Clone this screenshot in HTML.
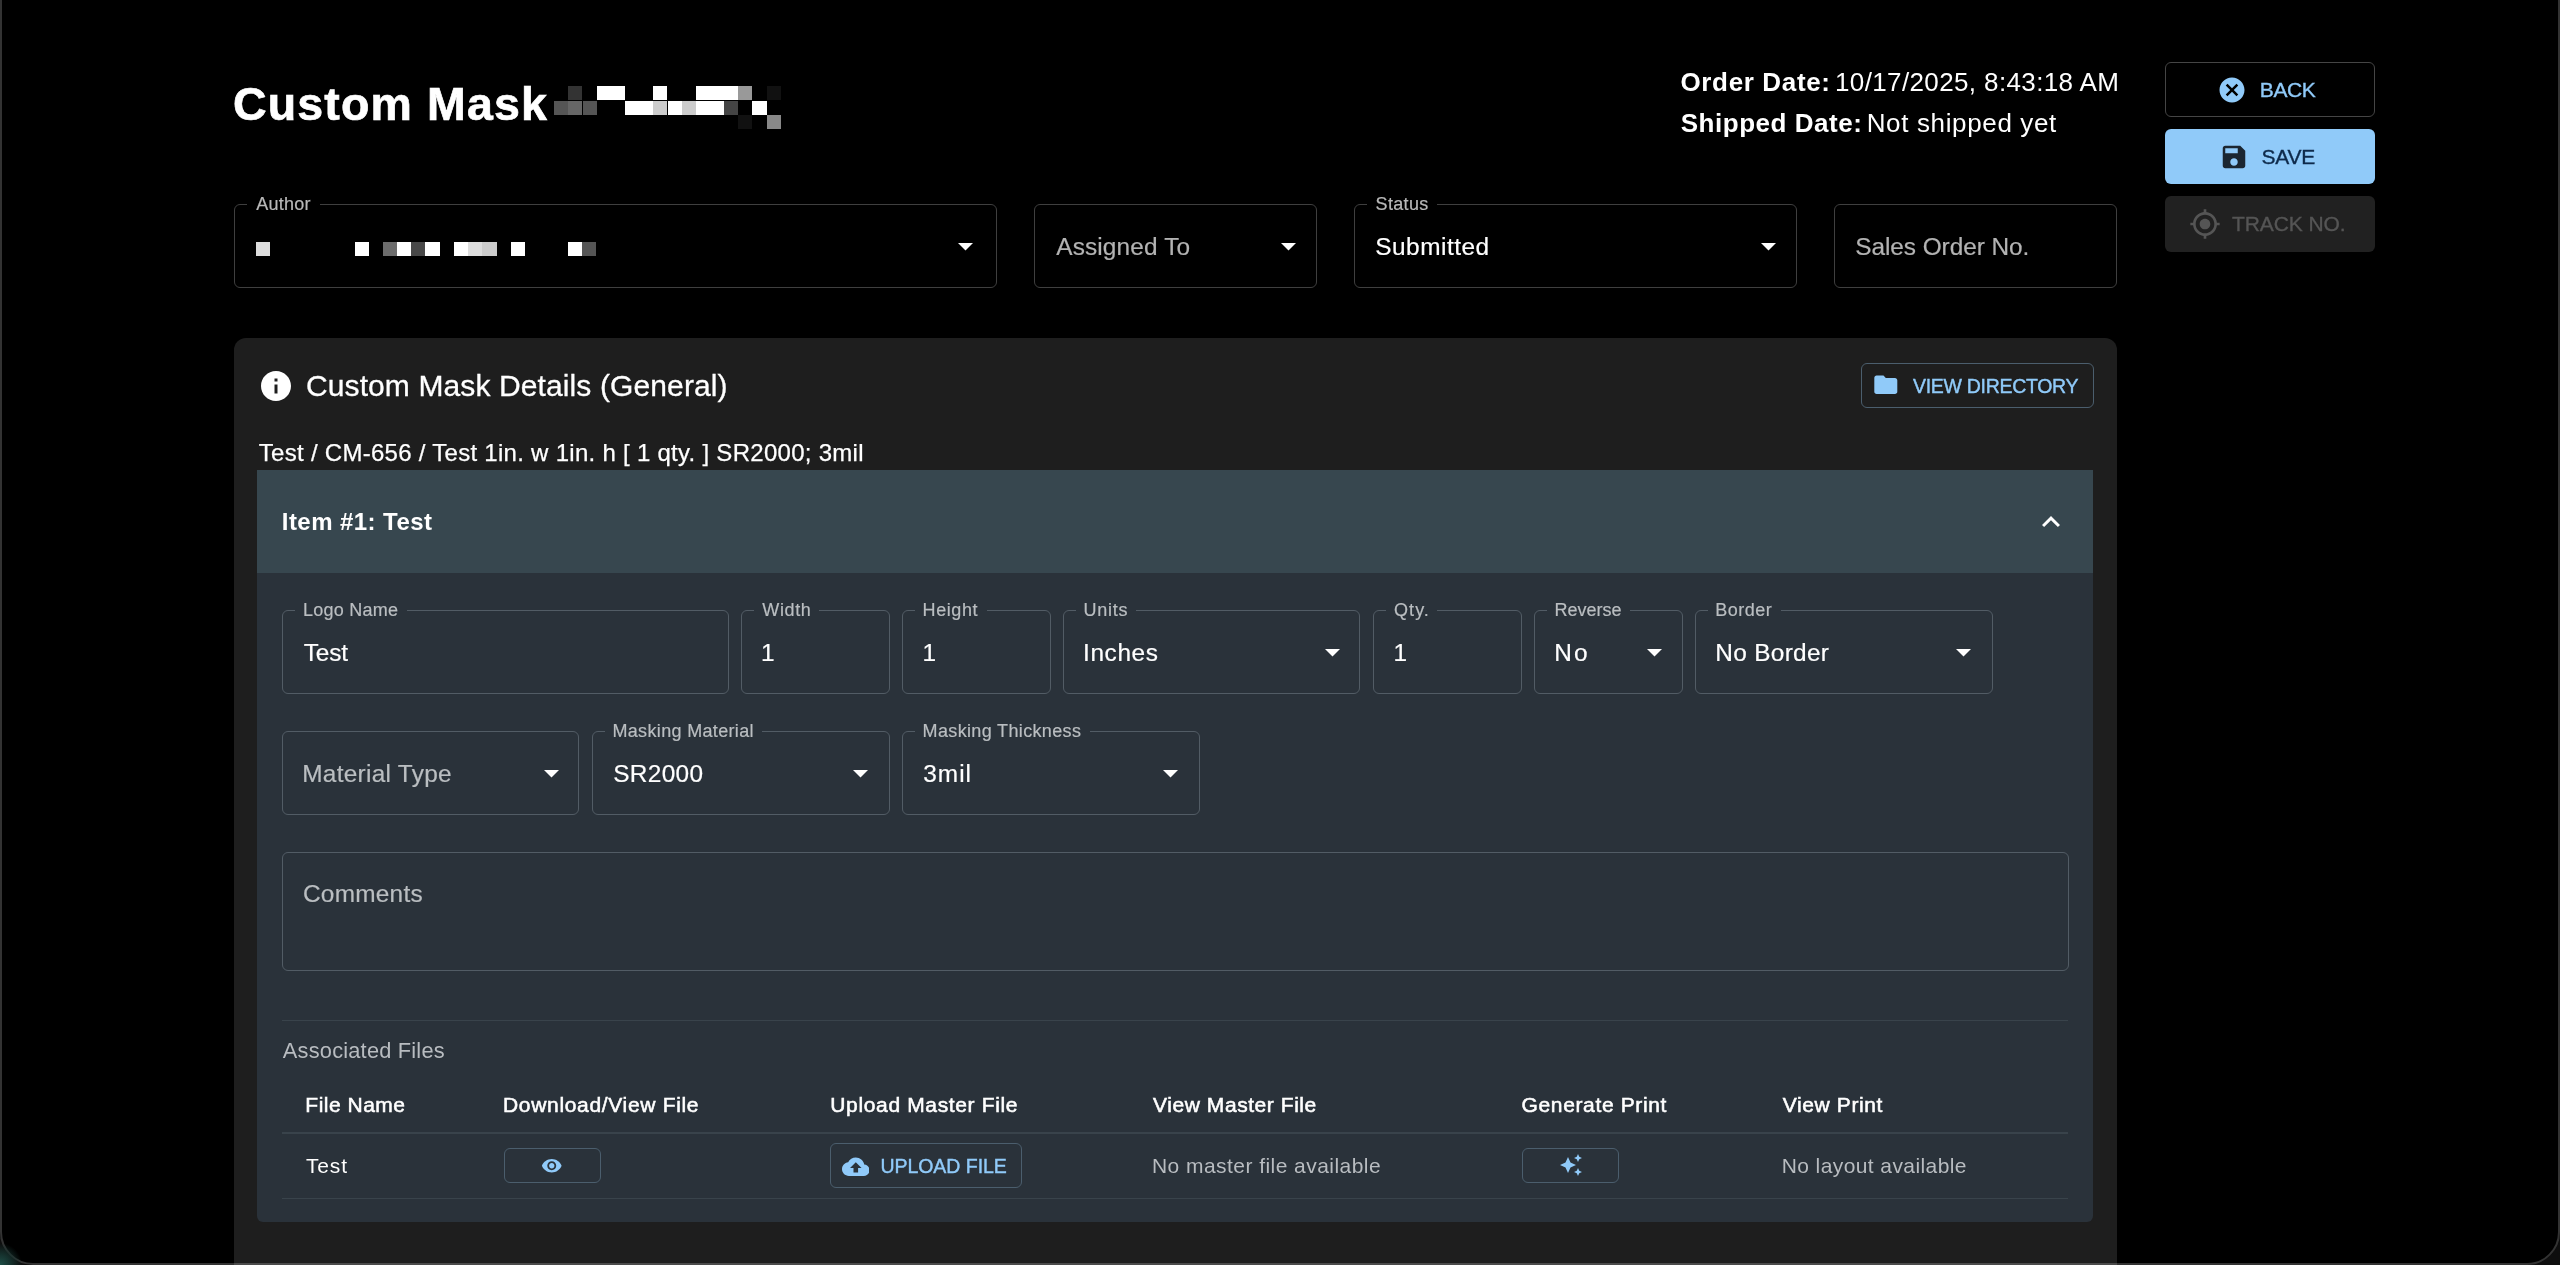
<!DOCTYPE html>
<html><head><meta charset="utf-8"><title>Custom Mask</title>
<style>
html,body{margin:0;padding:0;background:#000;font-family:"Liberation Sans",sans-serif;}
body{width:2560px;height:1265px;overflow:hidden;position:relative;font-family:"Liberation Sans",sans-serif;}
#root{position:absolute;left:0;top:0;width:2560px;height:1265px;overflow:hidden;will-change:transform;}
#root>div,#root>svg,#root>span{position:absolute;display:block}
.t{white-space:nowrap;line-height:1;}
.frame{left:0;top:-60px;width:2560px;height:1325px;box-sizing:border-box;border:2.3px solid rgba(255,255,255,0.2);border-radius:0 0 33px 33px;pointer-events:none;box-shadow:0 0 0 60px #0e0e0e}
.teal{left:0;top:1235px;width:30px;height:30px;background:radial-gradient(circle at 0 100%, #1f4f48 0, #16332f 10px, rgba(20,20,20,0) 22px)}
</style></head><body><div id="root">
<span id="title" class="t" style="left:233.00px;top:81.14px;font-size:46.5px;color:#fff;font-weight:700;letter-spacing:1.145px;-webkit-text-stroke:0.7px #fff;">Custom Mask</span>
<div style="left:568.4px;top:86.3px;width:14.100000000000023px;height:14.200000000000003px;background:rgb(51,51,51)"></div>
<div style="left:596.7px;top:86.3px;width:14.099999999999909px;height:14.200000000000003px;background:rgb(255,255,255)"></div>
<div style="left:610.8px;top:86.3px;width:14.200000000000045px;height:14.200000000000003px;background:rgb(255,255,255)"></div>
<div style="left:653.3px;top:86.3px;width:14.200000000000045px;height:14.200000000000003px;background:rgb(255,255,255)"></div>
<div style="left:695.8px;top:86.3px;width:14.200000000000045px;height:14.200000000000003px;background:rgb(255,255,255)"></div>
<div style="left:710.0px;top:86.3px;width:14.100000000000023px;height:14.200000000000003px;background:rgb(255,255,255)"></div>
<div style="left:724.1px;top:86.3px;width:14.199999999999932px;height:14.200000000000003px;background:rgb(255,255,255)"></div>
<div style="left:738.3px;top:86.3px;width:14.100000000000023px;height:14.200000000000003px;background:rgb(153,153,153)"></div>
<div style="left:766.6px;top:86.3px;width:14.199999999999932px;height:14.200000000000003px;background:rgb(17,17,17)"></div>
<div style="left:554.2px;top:100.5px;width:14.199999999999932px;height:14.200000000000003px;background:rgb(85,85,85)"></div>
<div style="left:568.4px;top:100.5px;width:14.100000000000023px;height:14.200000000000003px;background:rgb(102,102,102)"></div>
<div style="left:582.5px;top:100.5px;width:14.200000000000045px;height:14.200000000000003px;background:rgb(85,85,85)"></div>
<div style="left:625.0px;top:100.5px;width:14.200000000000045px;height:14.200000000000003px;background:rgb(255,255,255)"></div>
<div style="left:639.2px;top:100.5px;width:14.099999999999909px;height:14.200000000000003px;background:rgb(255,255,255)"></div>
<div style="left:653.3px;top:100.5px;width:14.200000000000045px;height:14.200000000000003px;background:rgb(204,204,204)"></div>
<div style="left:667.5px;top:100.5px;width:14.100000000000023px;height:14.200000000000003px;background:rgb(255,255,255)"></div>
<div style="left:681.6px;top:100.5px;width:14.199999999999932px;height:14.200000000000003px;background:rgb(204,204,204)"></div>
<div style="left:695.8px;top:100.5px;width:14.200000000000045px;height:14.200000000000003px;background:rgb(255,255,255)"></div>
<div style="left:710.0px;top:100.5px;width:14.100000000000023px;height:14.200000000000003px;background:rgb(255,255,255)"></div>
<div style="left:724.1px;top:100.5px;width:14.199999999999932px;height:14.200000000000003px;background:rgb(68,68,68)"></div>
<div style="left:752.4px;top:100.5px;width:14.200000000000045px;height:14.200000000000003px;background:rgb(255,255,255)"></div>
<div style="left:738.3px;top:114.7px;width:14.100000000000023px;height:14.200000000000003px;background:rgb(17,17,17)"></div>
<div style="left:766.6px;top:114.7px;width:14.199999999999932px;height:14.200000000000003px;background:rgb(136,136,136)"></div>
<span id="od_b" class="t" style="left:1680.50px;top:68.99px;font-size:26px;color:#fff;font-weight:700;letter-spacing:0.640px;">Order Date:</span>
<span id="od_v" class="t" style="left:1835.00px;top:68.99px;font-size:26px;color:#fff;font-weight:400;letter-spacing:0.374px;">10/17/2025, 8:43:18 AM</span>
<span id="sd_b" class="t" style="left:1680.75px;top:109.79px;font-size:26px;color:#fff;font-weight:700;letter-spacing:0.525px;">Shipped Date:</span>
<span id="sd_v" class="t" style="left:1866.70px;top:109.79px;font-size:26px;color:#fff;font-weight:400;letter-spacing:0.639px;">Not shipped yet</span>
<div style="left:2165px;top:62px;width:210px;height:54.5px;border:1.5px solid #454545;border-radius:6px;box-sizing:border-box"></div>
<svg style="left:2217.3px;top:74.8px" width="30" height="30" viewBox="0 0 24 24"><path fill="#90caf9" d="M12 2C6.47 2 2 6.47 2 12s4.47 10 10 10 10-4.47 10-10S17.53 2 12 2zm5 13.59L15.59 17 12 13.41 8.41 17 7 15.590 10.59 12 7 8.41 8.41 7 12 10.59 15.59 7 17 8.41 13.41 12 17 15.59z"/></svg>
<span id="back" class="t" style="left:2259.75px;top:78.72px;font-size:21px;color:#90caf9;font-weight:400;letter-spacing:-0.368px;-webkit-text-stroke:0.35px #90caf9;">BACK</span>
<div style="left:2165px;top:129px;width:210px;height:54.5px;background:#90caf9;border-radius:6px"></div>
<svg style="left:2219.4px;top:142.4px" width="30" height="30" viewBox="0 0 24 24"><path fill="#1b2631" d="M17 3H5c-1.11 0-2 .9-2 2v14c0 1.1.89 2 2 2h14c1.1 0 2-.9 2-2V7l-4-4zm-5 16c-1.66 0-3-1.34-3-3s1.34-3 3-3 3 1.34 3 3-1.34 3-3 3zm3-10H5V5h10v4z"/></svg>
<span id="save" class="t" style="left:2261.50px;top:145.62px;font-size:21px;color:#0e2a4b;font-weight:400;letter-spacing:-0.267px;-webkit-text-stroke:0.35px #0e2a4b;">SAVE</span>
<div style="left:2165px;top:196px;width:210px;height:55.5px;background:#212121;border-radius:6px"></div>
<svg style="left:2188.8px;top:208.3px" width="32" height="32" viewBox="0 0 24 24"><path fill="#555" d="M12 8c-2.21 0-4 1.79-4 4s1.79 4 4 4 4-1.79 4-4-1.79-4-4-4zm8.94 3c-.46-4.17-3.77-7.48-7.94-7.94V1h-2v2.06C6.83 3.52 3.52 6.83 3.06 11H1v2h2.06c.46 4.17 3.77 7.48 7.94 7.94V23h2v-2.06c4.17-.46 7.48-3.77 7.94-7.94H23v-2h-2.06zM12 19c-3.87 0-7-3.13-7-7s3.13-7 7-7 7 3.13 7 7-3.13 7-7 7z"/></svg>
<span id="track" class="t" style="left:2232.05px;top:213.22px;font-size:21px;color:#555;font-weight:400;letter-spacing:-0.105px;-webkit-text-stroke:0.35px #555;">TRACK NO.</span>
<div style="left:234px;top:204px;width:762.5px;height:83.5px;border:1.7px solid #3f3f3f;border-radius:6px;box-sizing:border-box"></div>
<div style="left:247px;top:203px;width:72.5px;height:4px;background:#000"></div>
<span id="author_l" class="t" style="left:256.30px;top:195.06px;font-size:18px;color:#b9b9b9;font-weight:400;letter-spacing:0.230px;-webkit-text-stroke:0.2px #b9b9b9;">Author</span>
<svg style="left:957.5px;top:243.0px" width="15" height="7.5" viewBox="0 0 10 5"><path d="M0 0L5 5L10 0z" fill="#fff"/></svg>
<div style="left:256px;top:242.4px;width:14px;height:13.999999999999972px;background:#ddd"></div>
<div style="left:355px;top:242.4px;width:14px;height:13.999999999999972px;background:#fff"></div>
<div style="left:383px;top:242.4px;width:14px;height:13.999999999999972px;background:#6c6c6c"></div>
<div style="left:397px;top:242.4px;width:14px;height:13.999999999999972px;background:#fff"></div>
<div style="left:411px;top:242.4px;width:14px;height:13.999999999999972px;background:#484848"></div>
<div style="left:425px;top:242.4px;width:15px;height:13.999999999999972px;background:#fff"></div>
<div style="left:454px;top:242.4px;width:14px;height:13.999999999999972px;background:#fff"></div>
<div style="left:468px;top:242.4px;width:14px;height:13.999999999999972px;background:#ddd"></div>
<div style="left:482px;top:242.4px;width:15px;height:13.999999999999972px;background:#ccc"></div>
<div style="left:511px;top:242.4px;width:14px;height:13.999999999999972px;background:#fff"></div>
<div style="left:568px;top:242.4px;width:14px;height:13.999999999999972px;background:#fff"></div>
<div style="left:582px;top:242.4px;width:14px;height:13.999999999999972px;background:#555"></div>
<div style="left:1034px;top:204px;width:282.5px;height:83.5px;border:1.7px solid #3f3f3f;border-radius:6px;box-sizing:border-box"></div>
<span id="assigned_v" class="t" style="left:1056.25px;top:234.55px;font-size:24.4px;color:#b3b3b3;font-weight:400;letter-spacing:0.135px;-webkit-text-stroke:0.2px #b3b3b3;">Assigned To</span>
<svg style="left:1281.0px;top:243.0px" width="15" height="7.5" viewBox="0 0 10 5"><path d="M0 0L5 5L10 0z" fill="#fff"/></svg>
<div style="left:1354px;top:204px;width:443px;height:83.5px;border:1.7px solid #3f3f3f;border-radius:6px;box-sizing:border-box"></div>
<div style="left:1367px;top:203px;width:70.0px;height:4px;background:#000"></div>
<span id="status_l" class="t" style="left:1375.55px;top:195.06px;font-size:18px;color:#b9b9b9;font-weight:400;letter-spacing:0.350px;-webkit-text-stroke:0.2px #b9b9b9;">Status</span>
<span id="status_v" class="t" style="left:1375.25px;top:234.55px;font-size:24.4px;color:#fff;font-weight:400;letter-spacing:0.513px;-webkit-text-stroke:0.2px #fff;">Submitted</span>
<svg style="left:1761.0px;top:243.0px" width="15" height="7.5" viewBox="0 0 10 5"><path d="M0 0L5 5L10 0z" fill="#fff"/></svg>
<div style="left:1834px;top:204px;width:282.5px;height:83.5px;border:1.7px solid #3f3f3f;border-radius:6px;box-sizing:border-box"></div>
<span id="sales_v" class="t" style="left:1855.25px;top:234.55px;font-size:24.4px;color:#b3b3b3;font-weight:400;letter-spacing:-0.057px;-webkit-text-stroke:0.2px #b3b3b3;">Sales Order No.</span>
<div style="left:234px;top:337.8px;width:1883px;height:962.2px;background:#1e1e1e;border-radius:12px"></div>
<svg style="left:257.8px;top:368.2px" width="36" height="36" viewBox="0 0 24 24"><path fill="#fff" d="M12 2C6.48 2 2 6.48 2 12s4.48 10 10 10 10-4.48 10-10S17.52 2 12 2zm1 15h-2v-6h2v6zm0-8h-2V7h2v2z"/></svg>
<span id="cardtitle" class="t" style="left:305.95px;top:371.00px;font-size:30px;color:#fff;font-weight:400;letter-spacing:0.113px;-webkit-text-stroke:0.3px #fff;">Custom Mask Details (General)</span>
<div style="left:1861px;top:362.5px;width:232.5px;height:45px;border:1.9px solid #4b5e6d;border-radius:6px;box-sizing:border-box"></div>
<svg style="left:1872.4px;top:371px" width="27.6" height="27.6" viewBox="0 0 24 24"><path fill="#90caf9" d="M10 4H4c-1.1 0-1.99.9-1.99 2L2 18c0 1.1.9 2 2 2h16c1.1 0 2-.9 2-2V8c0-1.1-.9-2-2-2h-8l-2-2z"/></svg>
<span id="viewdir" class="t" style="left:1913.00px;top:376.69px;font-size:19.5px;color:#90caf9;font-weight:400;letter-spacing:-0.299px;-webkit-text-stroke:0.4px #90caf9;">VIEW DIRECTORY</span>
<span id="subtitle" class="t" style="left:258.80px;top:441.18px;font-size:24px;color:#fff;font-weight:400;letter-spacing:0.281px;-webkit-text-stroke:0.25px #fff;">Test / CM-656 / Test 1in. w 1in. h [ 1 qty. ] SR2000; 3mil</span>
<div style="left:257.3px;top:469.5px;width:1836.0000000000002px;height:103.29999999999995px;background:#37474f"></div>
<div style="left:257.3px;top:572.8px;width:1836.0000000000002px;height:649.2px;background:#2a323a;border-radius:0 0 6px 6px"></div>
<span id="item" class="t" style="left:281.85px;top:510.18px;font-size:24px;color:#fff;font-weight:700;letter-spacing:0.433px;">Item #1: Test</span>
<svg style="left:2032.7px;top:503.6px" width="36" height="36" viewBox="0 0 24 24"><path fill="#fff" d="M12 8l-6 6 1.41 1.41L12 10.83l4.59 4.58L18 14z"/></svg>
<div style="left:282px;top:610px;width:447px;height:84px;border:1.7px solid #525c65;border-radius:6px;box-sizing:border-box"></div>
<div style="left:295px;top:609px;width:111.5px;height:4px;background:#2a323a"></div>
<span id="logo_l" class="t" style="left:303.05px;top:601.06px;font-size:18px;color:#babec1;font-weight:400;letter-spacing:0.226px;-webkit-text-stroke:0.2px #babec1;">Logo Name</span>
<span id="logo_v" class="t" style="left:303.75px;top:640.55px;font-size:24.4px;color:#fff;font-weight:400;letter-spacing:-0.117px;-webkit-text-stroke:0.2px #fff;">Test</span>
<div style="left:740.5px;top:610px;width:149.5px;height:84px;border:1.7px solid #525c65;border-radius:6px;box-sizing:border-box"></div>
<div style="left:753.5px;top:609px;width:65.5px;height:4px;background:#2a323a"></div>
<span id="width_l" class="t" style="left:762.30px;top:601.06px;font-size:18px;color:#babec1;font-weight:400;letter-spacing:0.624px;-webkit-text-stroke:0.2px #babec1;">Width</span>
<span id="width_v" class="t" style="left:761.00px;top:640.55px;font-size:24.4px;color:#fff;font-weight:400;letter-spacing:0.000px;-webkit-text-stroke:0.2px #fff;">1</span>
<div style="left:902px;top:610px;width:149px;height:84px;border:1.7px solid #525c65;border-radius:6px;box-sizing:border-box"></div>
<div style="left:915px;top:609px;width:71.70000000000005px;height:4px;background:#2a323a"></div>
<span id="height_l" class="t" style="left:922.60px;top:601.06px;font-size:18px;color:#babec1;font-weight:400;letter-spacing:0.580px;-webkit-text-stroke:0.2px #babec1;">Height</span>
<span id="height_v" class="t" style="left:922.50px;top:640.55px;font-size:24.4px;color:#fff;font-weight:400;letter-spacing:0.000px;-webkit-text-stroke:0.2px #fff;">1</span>
<div style="left:1063px;top:610px;width:297px;height:84px;border:1.7px solid #525c65;border-radius:6px;box-sizing:border-box"></div>
<div style="left:1076px;top:609px;width:60.0px;height:4px;background:#2a323a"></div>
<span id="units_l" class="t" style="left:1083.55px;top:601.06px;font-size:18px;color:#babec1;font-weight:400;letter-spacing:0.712px;-webkit-text-stroke:0.2px #babec1;">Units</span>
<span id="units_v" class="t" style="left:1083.00px;top:640.55px;font-size:24.4px;color:#fff;font-weight:400;letter-spacing:0.620px;-webkit-text-stroke:0.2px #fff;">Inches</span>
<svg style="left:1324.5px;top:649.25px" width="15" height="7.5" viewBox="0 0 10 5"><path d="M0 0L5 5L10 0z" fill="#fff"/></svg>
<div style="left:1373px;top:610px;width:148.5px;height:84px;border:1.7px solid #525c65;border-radius:6px;box-sizing:border-box"></div>
<div style="left:1386px;top:609px;width:50.5px;height:4px;background:#2a323a"></div>
<span id="qty_l" class="t" style="left:1394.05px;top:601.06px;font-size:18px;color:#babec1;font-weight:400;letter-spacing:1.050px;-webkit-text-stroke:0.2px #babec1;">Qty.</span>
<span id="qty_v" class="t" style="left:1393.50px;top:640.55px;font-size:24.4px;color:#fff;font-weight:400;letter-spacing:0.000px;-webkit-text-stroke:0.2px #fff;">1</span>
<div style="left:1534px;top:610px;width:148.5px;height:84px;border:1.7px solid #525c65;border-radius:6px;box-sizing:border-box"></div>
<div style="left:1547px;top:609px;width:83.0px;height:4px;background:#2a323a"></div>
<span id="reverse_l" class="t" style="left:1554.55px;top:601.06px;font-size:18px;color:#babec1;font-weight:400;letter-spacing:0.000px;-webkit-text-stroke:0.2px #babec1;">Reverse</span>
<span id="reverse_v" class="t" style="left:1554.25px;top:640.55px;font-size:24.4px;color:#fff;font-weight:400;letter-spacing:2.250px;-webkit-text-stroke:0.2px #fff;">No</span>
<svg style="left:1646.5px;top:649.25px" width="15" height="7.5" viewBox="0 0 10 5"><path d="M0 0L5 5L10 0z" fill="#fff"/></svg>
<div style="left:1695px;top:610px;width:297.5px;height:84px;border:1.7px solid #525c65;border-radius:6px;box-sizing:border-box"></div>
<div style="left:1708px;top:609px;width:72.79999999999995px;height:4px;background:#2a323a"></div>
<span id="border_l" class="t" style="left:1715.25px;top:601.06px;font-size:18px;color:#babec1;font-weight:400;letter-spacing:0.490px;-webkit-text-stroke:0.2px #babec1;">Border</span>
<span id="border_v" class="t" style="left:1715.25px;top:640.55px;font-size:24.4px;color:#fff;font-weight:400;letter-spacing:0.320px;-webkit-text-stroke:0.2px #fff;">No Border</span>
<svg style="left:1956.0px;top:649.25px" width="15" height="7.5" viewBox="0 0 10 5"><path d="M0 0L5 5L10 0z" fill="#fff"/></svg>
<div style="left:282px;top:731px;width:297px;height:84px;border:1.7px solid #525c65;border-radius:6px;box-sizing:border-box"></div>
<span id="mattype_v" class="t" style="left:302.25px;top:761.55px;font-size:24.4px;color:#babec1;font-weight:400;letter-spacing:0.280px;-webkit-text-stroke:0.2px #babec1;">Material Type</span>
<svg style="left:543.5px;top:770.25px" width="15" height="7.5" viewBox="0 0 10 5"><path d="M0 0L5 5L10 0z" fill="#fff"/></svg>
<div style="left:592px;top:731px;width:298px;height:84px;border:1.7px solid #525c65;border-radius:6px;box-sizing:border-box"></div>
<div style="left:605px;top:730px;width:156.79999999999995px;height:4px;background:#2a323a"></div>
<span id="maskmat_l" class="t" style="left:612.45px;top:722.06px;font-size:18px;color:#babec1;font-weight:400;letter-spacing:0.337px;-webkit-text-stroke:0.2px #babec1;">Masking Material</span>
<span id="maskmat_v" class="t" style="left:613.25px;top:761.55px;font-size:24.4px;color:#fff;font-weight:400;letter-spacing:0.340px;-webkit-text-stroke:0.2px #fff;">SR2000</span>
<svg style="left:853.0px;top:770.25px" width="15" height="7.5" viewBox="0 0 10 5"><path d="M0 0L5 5L10 0z" fill="#fff"/></svg>
<div style="left:902px;top:731px;width:297.5px;height:84px;border:1.7px solid #525c65;border-radius:6px;box-sizing:border-box"></div>
<div style="left:915px;top:730px;width:174.5px;height:4px;background:#2a323a"></div>
<span id="maskth_l" class="t" style="left:922.60px;top:722.06px;font-size:18px;color:#babec1;font-weight:400;letter-spacing:0.349px;-webkit-text-stroke:0.2px #babec1;">Masking Thickness</span>
<span id="maskth_v" class="t" style="left:923.25px;top:761.55px;font-size:24.4px;color:#fff;font-weight:400;letter-spacing:1.018px;-webkit-text-stroke:0.2px #fff;">3mil</span>
<svg style="left:1162.5px;top:770.25px" width="15" height="7.5" viewBox="0 0 10 5"><path d="M0 0L5 5L10 0z" fill="#fff"/></svg>
<div style="left:282px;top:852px;width:1786.5px;height:119px;border:1.7px solid #525c65;border-radius:6px;box-sizing:border-box"></div>
<span id="comments_v" class="t" style="left:303.00px;top:882.35px;font-size:24.4px;color:#babec1;font-weight:400;letter-spacing:0.240px;-webkit-text-stroke:0.2px #babec1;">Comments</span>
<div style="left:282px;top:1019.5px;width:1786px;height:1.5px;background:#39434b"></div>
<span id="assoc" class="t" style="left:282.85px;top:1040.15px;font-size:21.8px;color:#b8bcc0;font-weight:400;letter-spacing:0.207px;">Associated Files</span>
<span id="h_fn" class="t" style="left:305.35px;top:1094.02px;font-size:21px;color:#fff;font-weight:400;letter-spacing:0.494px;-webkit-text-stroke:0.55px #fff;">File Name</span>
<span id="h_dl" class="t" style="left:503.00px;top:1094.02px;font-size:21px;color:#fff;font-weight:400;letter-spacing:0.677px;-webkit-text-stroke:0.55px #fff;">Download/View File</span>
<span id="h_up" class="t" style="left:830.30px;top:1094.02px;font-size:21px;color:#fff;font-weight:400;letter-spacing:0.645px;-webkit-text-stroke:0.55px #fff;">Upload Master File</span>
<span id="h_vm" class="t" style="left:1153.10px;top:1094.02px;font-size:21px;color:#fff;font-weight:400;letter-spacing:0.557px;-webkit-text-stroke:0.55px #fff;">View Master File</span>
<span id="h_gp" class="t" style="left:1521.60px;top:1094.02px;font-size:21px;color:#fff;font-weight:400;letter-spacing:0.630px;-webkit-text-stroke:0.55px #fff;">Generate Print</span>
<span id="h_vp" class="t" style="left:1782.80px;top:1094.02px;font-size:21px;color:#fff;font-weight:400;letter-spacing:0.603px;-webkit-text-stroke:0.55px #fff;">View Print</span>
<div style="left:282px;top:1132px;width:1786px;height:1.5px;background:#39434b"></div>
<span id="r_fn" class="t" style="left:306.00px;top:1154.92px;font-size:21px;color:#fff;font-weight:400;letter-spacing:0.833px;">Test</span>
<div style="left:503.8px;top:1148.3px;width:97.4px;height:34.8px;border:1.9px solid #4b5e6d;border-radius:6px;box-sizing:border-box"></div>
<svg style="left:541.3px;top:1155.2px" width="21.5" height="21.5" viewBox="0 0 24 24"><path fill="#90caf9" d="M12 4.5C7 4.5 2.73 7.61 1 12c1.73 4.39 6 7.5 11 7.5s9.27-3.11 11-7.5c-1.73-4.39-6-7.5-11-7.5zM12 17c-2.76 0-5-2.24-5-5s2.24-5 5-5 5 2.24 5 5-2.24 5-5 5zm0-8c-1.66 0-3 1.34-3 3s1.340 3 3 3 3-1.34 3-3-1.34-3-3-3z"/></svg>
<div style="left:830.4px;top:1143.3px;width:191.4px;height:45px;border:1.9px solid #4b5e6d;border-radius:6px;box-sizing:border-box"></div>
<svg style="left:841.5px;top:1152.8px" width="27.6" height="27.6" viewBox="0 0 24 24"><path fill="#90caf9" d="M19.35 10.04C18.67 6.59 15.64 4 12 4 9.11 4 6.6 5.64 5.35 8.04 2.34 8.36 0 10.91 0 14c0 3.31 2.69 6 6 6h13c2.76 0 5-2.24 5-5 0-2.64-2.05-4.78-4.65-4.96zM14 13v4h-4v-4H7l5-5 5 5h-3z"/></svg>
<span id="upload" class="t" style="left:880.40px;top:1157.19px;font-size:19.5px;color:#90caf9;font-weight:400;letter-spacing:-0.035px;-webkit-text-stroke:0.4px #90caf9;">UPLOAD FILE</span>
<span id="r_vm" class="t" style="left:1151.95px;top:1154.92px;font-size:21px;color:#b8bcc0;font-weight:400;letter-spacing:0.452px;">No master file available</span>
<div style="left:1522.2px;top:1148.3px;width:96.6px;height:34.8px;border:1.9px solid #4b5e6d;border-radius:6px;box-sizing:border-box"></div>
<svg style="left:1558.7px;top:1153px" width="24" height="24" viewBox="0 0 24 24"><path fill="#90caf9" d="m19 9 1.25-2.75L23 5l-2.75-1.25L19 1l-1.25 2.75L15 5l2.75 1.25L19 9zm-7.5.5L9 4 6.500 9.5 1 12l5.5 2.5L9 20l2.5-5.5L17 12l-5.5-2.5zM19 15l-1.25 2.75L15 19l2.75 1.25L19 23l1.25-2.75L23 19l-2.75-1.25L19 15z"/></svg>
<span id="r_vp" class="t" style="left:1781.65px;top:1154.92px;font-size:21px;color:#b8bcc0;font-weight:400;letter-spacing:0.411px;">No layout available</span>
<div style="left:282px;top:1197.7px;width:1786px;height:1.5px;background:#39434b"></div>
<div class="frame"></div><div class="teal"></div>
</div></body></html>
